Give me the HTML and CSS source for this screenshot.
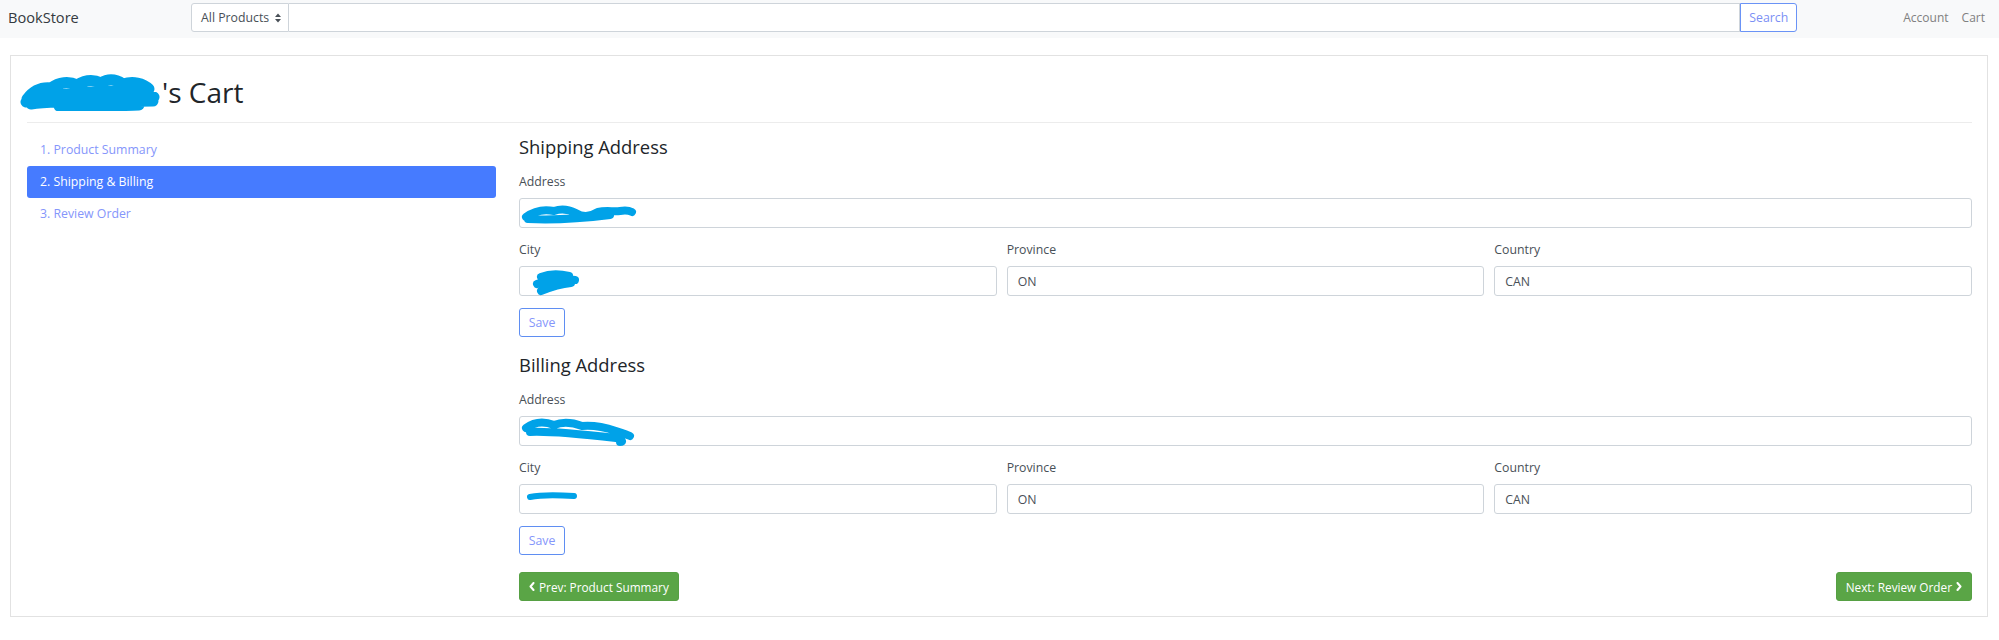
FILE: index.html
```html
<!DOCTYPE html>
<html lang="en">
<head>
<meta charset="utf-8">
<title>BookStore - Cart</title>
<link rel="stylesheet" href="styles.css">
</head>
<body>
<nav class="navbar">
  <a class="brand" href="#">BookStore</a>
  <div class="search">
    <div class="select">All Products
      <svg class="caret" width="6" height="10" viewBox="0 0 6 10"><polygon points="0,4 3,0.5 6,4" /><polygon points="0,6 3,9.5 6,6" /></svg>
    </div>
    <div class="search-input"></div>
    <button class="btn-search">Search</button>
  </div>
  <div class="nav-links">
    <a href="#">Account</a>
    <a href="#">Cart</a>
  </div>
</nav>

<main class="card">
  <h1 class="title">
    <svg class="redact" width="143" height="38" viewBox="0 0 143 38"><path d="M8 26 C 14 18, 22 14, 32 15 C 40 9, 50 8, 58 12 C 66 7, 74 6, 82 10 C 90 5, 98 7, 104 11 C 114 8, 124 10, 130 16 M7 29 C 20 22, 36 20, 52 21 C 70 18, 90 19, 110 18 C 120 19, 128 21, 135 24 M12 31 C 30 28, 50 30, 70 27 C 90 30, 110 28, 134 28 M40 33 C 60 35, 90 33, 120 32" /></svg><span>'s Cart</span>
  </h1>
  <hr class="divider">
  <div class="layout">
    <ul class="steps">
      <li><a href="#">1. Product Summary</a></li>
      <li class="active"><a href="#">2. Shipping &amp; Billing</a></li>
      <li><a href="#">3. Review Order</a></li>
    </ul>

    <div class="forms">
      <section class="address">
        <h4 class="section-title">Shipping Address</h4>
        <div class="field">
          <label>Address</label>
          <div class="input">
            <svg class="redact addr" width="118" height="22" viewBox="0 0 118 22"><path d="M6 15 C 14 9, 24 7, 34 9 C 42 6, 50 8, 56 11 C 62 15, 70 15, 78 10 C 86 8, 94 10, 100 9 C 106 8, 110 9, 112 10 M8 17 C 30 18, 58 17, 90 13" /></svg>
          </div>
        </div>
        <div class="row3">
          <div class="field">
            <label>City</label>
            <div class="input">
              <svg class="redact city" width="50" height="28" viewBox="0 0 50 28"><path d="M10 8 C 20 4, 30 5, 38 7 M6 15 C 18 10, 32 9, 44 11 M10 22 C 20 18, 30 15, 40 14" /></svg>
            </div>
          </div>
          <div class="field">
            <label>Province</label>
            <div class="input">ON</div>
          </div>
          <div class="field">
            <label>Country</label>
            <div class="input">CAN</div>
          </div>
        </div>
        <button class="btn-save">Save</button>
      </section>

      <section class="address">
        <h4 class="section-title">Billing Address</h4>
        <div class="field">
          <label>Address</label>
          <div class="input">
            <svg class="redact addr" width="118" height="30" viewBox="0 0 118 30"><path d="M6 12 C 14 6, 24 5, 34 9 C 44 5, 54 7, 62 10 C 72 9, 84 11, 96 15 C 102 17, 108 19, 110 20 M10 16 C 30 15, 60 18, 96 22 C 102 24, 104 26, 100 26" /></svg>
          </div>
        </div>
        <div class="row3">
          <div class="field">
            <label>City</label>
            <div class="input">
              <svg class="redact bcity" width="56" height="14" viewBox="0 0 56 14"><path d="M6 8 C 20 5, 36 6, 50 7" /></svg>
            </div>
          </div>
          <div class="field">
            <label>Province</label>
            <div class="input">ON</div>
          </div>
          <div class="field">
            <label>Country</label>
            <div class="input">CAN</div>
          </div>
        </div>
        <button class="btn-save">Save</button>
      </section>

      <div class="pager">
        <button class="btn-green">
          <svg class="chev" width="6" height="9" viewBox="0 0 6 9"><polyline points="4.5,1 1.5,4.5 4.5,8" /></svg>
          Prev: Product Summary
        </button>
        <button class="btn-green">
          Next: Review Order
          <svg class="chev" width="6" height="9" viewBox="0 0 6 9"><polyline points="1.5,1 4.5,4.5 1.5,8" /></svg>
        </button>
      </div>
    </div>
  </div>
</main>
</body>
</html>
```
FILE: styles.css
```css
* {
  box-sizing: border-box;
}

body {
  margin: 0;
  background: #ffffff;
  color: #212529;
  font-family: "Open Sans", "Noto Sans", sans-serif;
  font-size: 12.3px;
}

a {
  text-decoration: none;
}

button {
  font-family: inherit;
  font-size: 12.3px;
  cursor: pointer;
}

/* ---------- navbar ---------- */
.navbar {
  display: flex;
  align-items: center;
  height: 38px;
  padding: 3px 14px 6px 8px;
  background: #f8f9fa;
}

.brand {
  width: 183px;
  line-height: 29px;
  font-size: 14.6px;
  color: #343a40;
}

.search {
  flex: 1;
  display: flex;
  height: 29px;
  margin-right: 106px;
}

.select {
  display: flex;
  align-items: center;
  gap: 6px;
  width: 98px;
  padding-left: 9px;
  background: #ffffff;
  border: 1px solid #ced4da;
  border-radius: 3px 0 0 3px;
  color: #495057;
  white-space: nowrap;
}

.caret {
  fill: #495057;
}

.search-input {
  flex: 1;
  background: #ffffff;
  border: 1px solid #ced4da;
  border-left: none;
}

.btn-search {
  width: 57px;
  padding: 0;
  background: #ffffff;
  border: 1px solid #6a93f6;
  border-radius: 0 3px 3px 0;
  color: #7b8ff5;
}

.nav-links {
  display: flex;
  gap: 13px;
  line-height: 29px;
}

.nav-links a {
  font-size: 12px;
  color: #808080;
}

/* ---------- card ---------- */
.card {
  margin: 17px 11px 0 10px;
  padding: 18px 15px 15px 16px;
  border: 1px solid #e2e2e2;
  background: #ffffff;
}

.title {
  display: flex;
  align-items: center;
  height: 36px;
  margin: 0 0 12px;
  font-size: 28px;
  font-weight: 500;
  line-height: 36px;
  color: #212529;
}

.redact path {
  fill: none;
  stroke: #00a2e8;
  stroke-linecap: round;
  stroke-linejoin: round;
}

.title .redact {
  margin-left: -8px;
  flex: none;
}

.title .redact path {
  stroke-width: 11;
}

.divider {
  margin: 0;
  border: none;
  border-top: 1px solid #ececec;
}

.layout {
  display: grid;
  grid-template-columns: 469px 1fr;
  column-gap: 23px;
  margin-top: 11px;
}

/* ---------- steps ---------- */
.steps {
  list-style: none;
  margin: 0;
  padding: 0;
}

.steps li a {
  display: block;
  height: 32px;
  padding-left: 13px;
  line-height: 32px;
  border-radius: 3px;
  color: #8596fb;
}

.steps li.active a {
  background: #467bff;
  color: #ffffff;
}

/* ---------- forms ---------- */
.address {
  padding-top: 2px;
}

.address + .address {
  margin-top: 15px;
}

.section-title {
  margin: 0 0 15px;
  font-size: 18.4px;
  font-weight: 500;
  line-height: 22px;
  color: #212529;
}

.field label {
  display: block;
  margin-bottom: 7px;
  line-height: 18px;
  color: #495057;
}

.input {
  display: flex;
  align-items: center;
  height: 30px;
  padding: 0 10px;
  background: #ffffff;
  border: 1px solid #ced4da;
  border-radius: 3px;
  color: #495057;
  overflow: visible;
}

.row3 {
  display: grid;
  grid-template-columns: 1fr 1fr 1fr;
  column-gap: 10px;
  margin-top: 13px;
}

.redact.addr {
  margin-left: -10px;
  flex: none;
}

.redact.addr path {
  stroke-width: 8;
}

.redact.city {
  margin-left: 1px;
  margin-top: 4px;
  flex: none;
}

.redact.city path {
  stroke-width: 8;
}

.redact.bcity {
  margin-left: -6px;
  margin-top: -6px;
  flex: none;
}

.redact.bcity path {
  stroke-width: 6;
}

.btn-save {
  display: block;
  width: 46px;
  height: 29px;
  margin-top: 12px;
  padding: 0;
  background: #ffffff;
  border: 1px solid #5f8ef2;
  border-radius: 3px;
  color: #8596fb;
}

.pager {
  display: flex;
  justify-content: space-between;
  margin-top: 17px;
}

.btn-green {
  display: flex;
  align-items: center;
  gap: 4px;
  height: 29px;
  padding: 0 9px;
  background: #5aa546;
  border: 1px solid #56a043;
  border-radius: 3px;
  color: #ffffff;
  font-size: 11.8px;
}

.chev polyline {
  fill: none;
  stroke: #ffffff;
  stroke-width: 2;
  stroke-linecap: round;
  stroke-linejoin: round;
}
```
